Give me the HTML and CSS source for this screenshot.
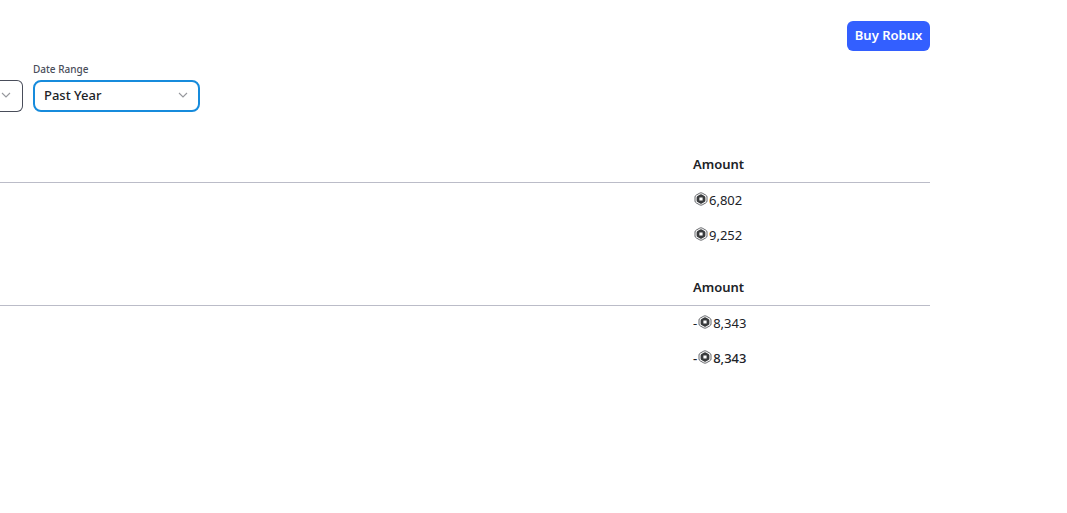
FILE: index.html
```html
<!DOCTYPE html>
<html lang="en">
<head>
  <meta charset="UTF-8">
  <meta name="viewport" content="width=device-width, initial-scale=1.0">
  <title>Transactions</title>
  <link rel="stylesheet" href="styles.css">
</head>
<body>
  <svg class="sprite" aria-hidden="true">
    <symbol id="robux" viewBox="0 0 14 14">
      <path d="M5.8 1.1Q7 .5 8.2 1.1L11.8 3.1Q13 3.8 13 5V9Q13 10.2 11.8 10.9L8.2 12.9Q7 13.5 5.8 12.9L2.2 10.9Q1 10.2 1 9V5Q1 3.8 2.2 3.1Z" fill="none" stroke="#55575b" stroke-width="0.9"/>
      <path d="M6.1 2.5Q7 2 7.9 2.5L10.5 4Q11.4 4.5 11.4 5.5V8.5Q11.4 9.5 10.5 10L7.9 11.5Q7 12 6.1 11.5L3.5 10Q2.6 9.5 2.6 8.5V5.5Q2.6 4.5 3.5 4ZM5.4 5.4V8.6H8.6V5.4Z" fill="#393b3d" fill-rule="evenodd"/>
    </symbol>
    <symbol id="chevron" viewBox="0 0 10 6">
      <path d="M1 1L5 5L9 1" fill="none" stroke="#96989d" stroke-width="1.1"/>
    </symbol>
  </svg>

  <main class="page">
    <header class="top">
      <button class="btn-buy" type="button">Buy Robux</button>
    </header>

    <section class="filters">
      <div class="field field-type">
        <div class="select-wrap">
          <select class="select" aria-label="Type"></select>
          <svg class="chevron"><use href="#chevron"/></svg>
        </div>
      </div>
      <div class="field field-range">
        <label for="range">Date Range</label>
        <div class="select-wrap">
          <select class="select active" id="range">
            <option>Past Year</option>
          </select>
          <svg class="chevron"><use href="#chevron"/></svg>
        </div>
      </div>
    </section>

    <table class="summary">
      <thead>
        <tr><td></td><th scope="col">Amount</th></tr>
      </thead>
      <tbody>
        <tr><td></td><td><span class="amount"><svg class="robux"><use href="#robux"/></svg>6,802</span></td></tr>
        <tr><td></td><td><span class="amount"><svg class="robux"><use href="#robux"/></svg>9,252</span></td></tr>
      </tbody>
    </table>

    <table class="summary">
      <thead>
        <tr><td></td><th scope="col">Amount</th></tr>
      </thead>
      <tbody>
        <tr><td></td><td><span class="amount">-<svg class="robux"><use href="#robux"/></svg>8,343</span></td></tr>
        <tr class="total"><td></td><td><span class="amount">-<svg class="robux"><use href="#robux"/></svg>8,343</span></td></tr>
      </tbody>
    </table>
  </main>
</body>
</html>
```
FILE: styles.css
```css
* {
  box-sizing: border-box;
}

body {
  margin: 0;
  font-family: "Noto Sans", sans-serif;
  font-size: 13px;
  line-height: 20px;
  background: #fff;
  color: #202227;
}

.sprite {
  display: none;
}

.page {
  margin-right: 137px;
  padding-top: 21px;
}

.top {
  display: flex;
  justify-content: flex-end;
}

.btn-buy {
  width: 83px;
  height: 30px;
  padding: 0 0 2px;
  border: 0;
  border-radius: 6px;
  background: #335fff;
  color: #fff;
  font: inherit;
  font-weight: 600;
}

.filters {
  display: flex;
  align-items: flex-end;
  gap: 10px;
  margin-top: 11px;
  margin-bottom: 35px;
}

.field label {
  display: block;
  font-size: 10px;
  font-weight: 500;
  line-height: 14px;
  margin-bottom: 4px;
  color: #494d5a;
}

.field-type {
  width: 23px;
}

.field-range {
  width: 167px;
}

.select-wrap {
  position: relative;
}

.select {
  display: block;
  width: 100%;
  height: 32px;
  padding: 0 9px 2px;
  border: 1px solid #494d5a;
  border-radius: 8px;
  background: #fff;
  color: #202227;
  font: inherit;
  font-weight: 500;
  appearance: none;
}

.field-type .select {
  padding: 0;
  border-left: 0;
  border-radius: 0 6px 6px 0;
}

.select.active {
  border: 2px solid #168bdc;
  outline: none;
}

.chevron {
  position: absolute;
  top: 12px;
  right: 12px;
  width: 10px;
  height: 6px;
  pointer-events: none;
}

.summary {
  width: 100%;
  border-collapse: collapse;
  table-layout: fixed;
  margin-bottom: 18px;
}

.summary th,
.summary td {
  height: 35px;
  padding: 0;
  text-align: left;
}

.summary thead tr {
  border-bottom: 1px solid #bbbcc8;
}

.summary th {
  width: 237px;
  font-weight: 600;
}

.amount {
  display: flex;
  align-items: center;
}

.total {
  font-weight: 500;
}

.robux {
  width: 14px;
  height: 14px;
  margin: 0 1px 1px;
}
```
